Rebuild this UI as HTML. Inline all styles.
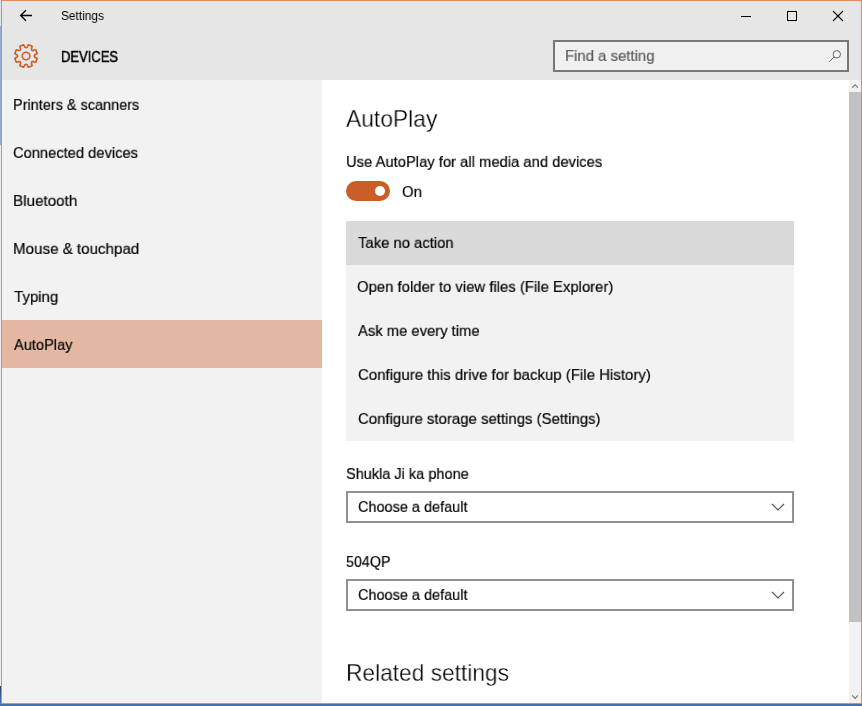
<!DOCTYPE html>
<html><head><meta charset="utf-8"><title>Settings</title>
<style>
html,body{margin:0;padding:0;}
body{width:862px;height:706px;overflow:hidden;position:relative;background:#4a70a6;font-family:"Liberation Sans",sans-serif;color:#000;}
div,svg{position:absolute;}
.t{white-space:nowrap;line-height:1;transform-origin:0 0;will-change:transform;}
#desk-l{left:0;top:0;width:1px;height:706px;background:linear-gradient(#dde4e7 0,#dde4e7 26px,#93abd3 26px,#93abd3 145px,#ececec 145px,#ececec 686px,#27457a 686px,#4a78b6 706px);}
#desk-b{left:0;top:704px;width:862px;height:2px;background:#456fa6;}
#win{left:1px;top:0;width:859px;height:702px;border:1px solid #e9885b;background:#fff;}
#hdr{left:2px;top:1px;width:859px;height:79px;background:#e6e6e6;}
#nav{left:2px;top:80px;width:320px;height:623px;background:#f2f2f2;}
#sel{left:2px;top:320px;width:320px;height:48px;background:#e4b7a2;}
#search{left:553px;top:40px;width:292px;height:28px;border:2px solid #777;background:#f0f0f0;}
#sbtrack{left:849px;top:80px;width:12px;height:623px;background:#f2f2f2;}
#sbthumb{left:849px;top:92px;width:12px;height:530px;background:#c2c2c2;}
#toggle{left:346px;top:181px;width:44px;height:20px;border-radius:10px;background:#cb5d28;}
#knob{left:375px;top:186px;width:10px;height:10px;border-radius:5px;background:#fff;}
#list{left:346px;top:221px;width:448px;height:220px;background:#f2f2f2;}
#lsel{left:346px;top:221px;width:448px;height:44px;background:#dadada;}
.combo{left:346px;width:444px;height:28px;border:2px solid #919191;background:#fff;}
</style></head><body>
<div id="desk-l"></div><div id="desk-b"></div><div id="win"></div><div id="hdr"></div><div id="nav"></div><div id="sel"></div>
<div id="search"></div><div id="sbtrack"></div><div id="sbthumb"></div>
<div id="list"></div><div id="lsel"></div><div id="toggle"></div><div id="knob"></div>
<div class="combo" style="top:491px"></div><div class="combo" style="top:579px"></div>
<svg width="862" height="706" viewBox="0 0 862 706" style="left:0;top:0" fill="none">
<path d="M32 15.5H20.7M25.9 10.2L20.6 15.5L25.9 20.8" stroke="#000" stroke-width="1.3"/>
<path d="M27.07 47.27 L28.49 44.77 L32.18 46.30 L31.42 49.07 Q31.52 50.48 32.93 50.58 L35.70 49.82 L37.23 53.51 L34.73 54.93 Q33.80 56.00 34.73 57.07 L37.23 58.49 L35.70 62.18 L32.93 61.42 Q31.52 61.52 31.42 62.93 L32.18 65.70 L28.49 67.23 L27.07 64.73 Q26.00 63.80 24.93 64.73 L23.51 67.23 L19.82 65.70 L20.58 62.93 Q20.48 61.52 19.07 61.42 L16.30 62.18 L14.77 58.49 L17.27 57.07 Q18.20 56.00 17.27 54.93 L14.77 53.51 L16.30 49.82 L19.07 50.58 Q20.48 50.48 20.58 49.07 L19.82 46.30 L23.51 44.77 L24.93 47.27 Q26.00 48.20 27.07 47.27 Z" stroke="#cf5f26" stroke-width="1.6" stroke-linejoin="round"/>
<circle cx="26" cy="56" r="3.8" stroke="#cf5f26" stroke-width="1.6"/>
<path d="M741 16.5H751" stroke="#000" stroke-width="1"/>
<rect x="787.5" y="11.5" width="9" height="9" stroke="#000" stroke-width="1"/>
<path d="M833 11L843 21M843 11L833 21" stroke="#000" stroke-width="1.1"/>
<circle cx="836.8" cy="54.3" r="3.7" stroke="#666" stroke-width="1"/>
<path d="M834.1 57L829.2 61.8" stroke="#666" stroke-width="1"/>
<path d="M852.2 87.7L855.1 84.8L858 87.7" stroke="#7a7a7a" stroke-width="1.2"/>
<path d="M852.2 695.4L855.1 698.3L858 695.4" stroke="#7a7a7a" stroke-width="1.2"/>
<path d="M772 504L778 510L784 504" stroke="#5a5a5a" stroke-width="1.2"/>
<path d="M772 592L778 598L784 592" stroke="#5a5a5a" stroke-width="1.2"/>
</svg>
<div class="t" style="left:61.25px;top:9px;font-size:12.5px;line-height:14px;font-weight:400;color:#000;transform:scale(0.9488,1);transform-origin:0 11px">Settings</div>
<div class="t" style="left:61.04px;top:48px;font-size:16px;line-height:17px;font-weight:400;color:#000;-webkit-text-stroke:0.6px #000;transform:scale(0.8122,0.92);transform-origin:0 14px">DEVICES</div>
<div class="t" style="left:12.68px;top:96px;font-size:16px;line-height:17px;font-weight:400;color:#000;-webkit-text-stroke:0.2px #000;transform:scale(0.9041,0.92);transform-origin:0 14px">Printers &amp; scanners</div>
<div class="t" style="left:12.58px;top:144px;font-size:16px;line-height:17px;font-weight:400;color:#000;-webkit-text-stroke:0.2px #000;transform:scale(0.918,0.92);transform-origin:0 14px">Connected devices</div>
<div class="t" style="left:12.62px;top:192px;font-size:16px;line-height:17px;font-weight:400;color:#000;-webkit-text-stroke:0.2px #000;transform:scale(0.9512,0.92);transform-origin:0 14px">Bluetooth</div>
<div class="t" style="left:12.63px;top:240px;font-size:16px;line-height:17px;font-weight:400;color:#000;-webkit-text-stroke:0.2px #000;transform:scale(0.9461,0.92);transform-origin:0 14px">Mouse &amp; touchpad</div>
<div class="t" style="left:13.96px;top:288px;font-size:16px;line-height:17px;font-weight:400;color:#000;-webkit-text-stroke:0.2px #000;transform:scale(0.94,0.92);transform-origin:0 14px">Typing</div>
<div class="t" style="left:14.01px;top:336px;font-size:16px;line-height:17px;font-weight:400;color:#000;-webkit-text-stroke:0.2px #000;transform:scale(0.9136,0.92);transform-origin:0 14px">AutoPlay</div>
<div class="t" style="left:345.93px;top:106px;font-size:23.6px;line-height:26px;font-weight:400;color:#000;-webkit-text-stroke:0.3px #fff;transform:scale(0.9672,1);transform-origin:0 21px">AutoPlay</div>
<div class="t" style="left:345.88px;top:153px;font-size:16px;line-height:17px;font-weight:400;color:#000;-webkit-text-stroke:0.2px #000;transform:scale(0.9234,0.92);transform-origin:0 14px">Use AutoPlay for all media and devices</div>
<div class="t" style="left:401.67px;top:183px;font-size:16px;line-height:17px;font-weight:400;color:#000;-webkit-text-stroke:0.2px #000;transform:scale(0.9321,0.92);transform-origin:0 14px">On</div>
<div class="t" style="left:357.96px;top:234px;font-size:16px;line-height:17px;font-weight:400;color:#000;-webkit-text-stroke:0.2px #000;transform:scale(0.9259,0.92);transform-origin:0 14px">Take no action</div>
<div class="t" style="left:357.47px;top:278px;font-size:16px;line-height:17px;font-weight:400;color:#000;-webkit-text-stroke:0.2px #000;transform:scale(0.9298,0.92);transform-origin:0 14px">Open folder to view files (File Explorer)</div>
<div class="t" style="left:357.81px;top:322px;font-size:16px;line-height:17px;font-weight:400;color:#000;-webkit-text-stroke:0.2px #000;transform:scale(0.924,0.92);transform-origin:0 14px">Ask me every time</div>
<div class="t" style="left:357.66px;top:366px;font-size:16px;line-height:17px;font-weight:400;color:#000;-webkit-text-stroke:0.2px #000;transform:scale(0.9384,0.92);transform-origin:0 14px">Configure this drive for backup (File History)</div>
<div class="t" style="left:357.67px;top:410px;font-size:16px;line-height:17px;font-weight:400;color:#000;-webkit-text-stroke:0.2px #000;transform:scale(0.934,0.92);transform-origin:0 14px">Configure storage settings (Settings)</div>
<div class="t" style="left:345.68px;top:465px;font-size:16px;line-height:17px;font-weight:400;color:#000;-webkit-text-stroke:0.2px #000;transform:scale(0.9078,0.92);transform-origin:0 14px">Shukla Ji ka phone</div>
<div class="t" style="left:357.5px;top:498px;font-size:16px;line-height:17px;font-weight:400;color:#000;-webkit-text-stroke:0.2px #000;transform:scale(0.905,0.92);transform-origin:0 14px">Choose a default</div>
<div class="t" style="left:346.01px;top:553px;font-size:16px;line-height:17px;font-weight:400;color:#000;-webkit-text-stroke:0.2px #000;transform:scale(0.8917,0.92);transform-origin:0 14px">504QP</div>
<div class="t" style="left:357.5px;top:586px;font-size:16px;line-height:17px;font-weight:400;color:#000;-webkit-text-stroke:0.2px #000;transform:scale(0.905,0.92);transform-origin:0 14px">Choose a default</div>
<div class="t" style="left:345.72px;top:660px;font-size:23.6px;line-height:26px;font-weight:400;color:#000;-webkit-text-stroke:0.3px #fff;transform:scale(0.963,1);transform-origin:0 21px">Related settings</div>
<div class="t" style="left:564.94px;top:47px;font-size:16px;line-height:17px;font-weight:400;color:#5c5c5c;-webkit-text-stroke:0.2px #5c5c5c;transform:scale(0.9311,0.92);transform-origin:0 14px">Find a setting</div>
</body></html>
